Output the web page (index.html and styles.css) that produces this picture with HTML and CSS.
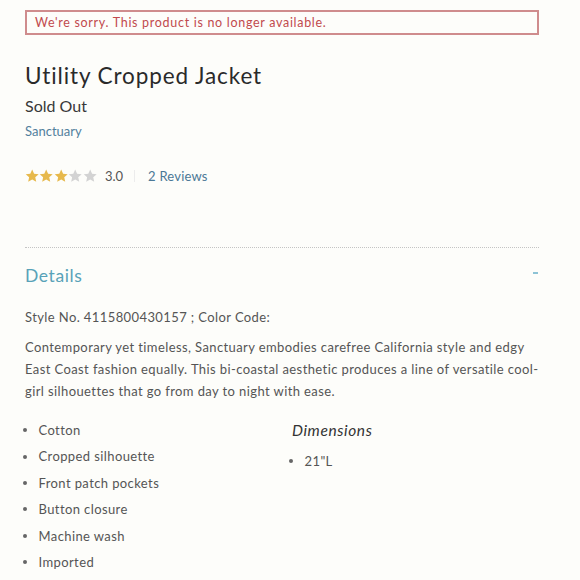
FILE: index.html
```html
<!DOCTYPE html>
<html lang="en">
<head>
    <meta charset="UTF-8">
    <meta name="viewport" content="width=device-width, initial-scale=1.0">
    <title>Utility Cropped Jacket</title>
    <link rel="stylesheet" href="styles.css">
</head>
<body>
    <div class="product">
        <div class="notice">We're sorry. This product is no longer available.</div>

        <h1 class="product-name">Utility Cropped Jacket</h1>
        <div class="price">Sold Out</div>
        <a class="brand" href="#">Sanctuary</a>

        <div class="rating">
            <span class="stars">
                <svg class="star on" viewBox="0 0 24 24"><path d="M12 1l3.2 7 7.6.8-5.7 5.1 1.6 7.5L12 17.6l-6.7 3.8 1.6-7.5-5.7-5.1 7.6-.8z"/></svg>
                <svg class="star on" viewBox="0 0 24 24"><path d="M12 1l3.2 7 7.6.8-5.7 5.1 1.6 7.5L12 17.6l-6.7 3.8 1.6-7.5-5.7-5.1 7.6-.8z"/></svg>
                <svg class="star on" viewBox="0 0 24 24"><path d="M12 1l3.2 7 7.6.8-5.7 5.1 1.6 7.5L12 17.6l-6.7 3.8 1.6-7.5-5.7-5.1 7.6-.8z"/></svg>
                <svg class="star" viewBox="0 0 24 24"><path d="M12 1l3.2 7 7.6.8-5.7 5.1 1.6 7.5L12 17.6l-6.7 3.8 1.6-7.5-5.7-5.1 7.6-.8z"/></svg>
                <svg class="star" viewBox="0 0 24 24"><path d="M12 1l3.2 7 7.6.8-5.7 5.1 1.6 7.5L12 17.6l-6.7 3.8 1.6-7.5-5.7-5.1 7.6-.8z"/></svg>
            </span>
            <span class="score">3.0</span>
            <span class="divider"></span>
            <a class="reviews" href="#">2 Reviews</a>
        </div>

        <div class="details">
            <div class="details-head">
                <h2>Details</h2>
                <span class="toggle"></span>
            </div>
            <p class="style-no">Style No. 4115800430157 ; Color Code:</p>
            <p class="description">Contemporary yet timeless, Sanctuary embodies carefree California style and edgy East Coast fashion equally. This bi-coastal aesthetic produces a line of versatile cool-girl silhouettes that go from day to night with ease.</p>

            <div class="specs">
                <ul class="bullets">
                    <li>Cotton</li>
                    <li>Cropped silhouette</li>
                    <li>Front patch pockets</li>
                    <li>Button closure</li>
                    <li>Machine wash</li>
                    <li>Imported</li>
                </ul>
                <div class="dimensions">
                    <h3>Dimensions</h3>
                    <ul class="bullets">
                        <li>21"L</li>
                    </ul>
                </div>
            </div>
        </div>
    </div>
</body>
</html>
```

FILE: styles.css
```css
body {
    margin: 0;
    background-color: #fdfdfa;
    font-family: Lato, "Open Sans", sans-serif;
    color: #555;
}

.product {
    width: 514px;
    padding: 10px 0 0 25px;
}

.notice {
    height: 21px;
    line-height: 21px;
    padding: 0 8px;
    border: 2px solid #cf8c8d;
    font-size: 12.5px;
    letter-spacing: 0.7px;
    color: #c14a4d;
}

.product-name {
    margin: 26px 0 0;
    font-size: 22.5px;
    line-height: 30px;
    font-weight: normal;
    letter-spacing: 0.9px;
    color: #2a2a2a;
}

.price {
    margin-top: 3px;
    font-size: 16px;
    line-height: 24px;
    color: #383838;
}

.brand {
    display: block;
    margin-top: 3px;
    font-size: 13px;
    line-height: 20px;
    color: #52809d;
    text-decoration: none;
}

.rating {
    display: flex;
    align-items: center;
    margin-top: 25px;
    height: 20px;
    font-size: 13px;
}

.stars {
    display: flex;
}

.star {
    width: 14.4px;
    height: 14.4px;
    fill: #d3d3d3;
}

.star.on {
    fill: #e7b94c;
}

.score {
    margin-left: 8px;
    color: #555;
}

.divider {
    width: 1px;
    height: 12px;
    margin: 0 13px 0 11px;
    background: #ececec;
}

.reviews {
    color: #4b7896;
    letter-spacing: 0.2px;
    text-decoration: none;
}

.details {
    margin-top: 61px;
    border-top: 1px dotted #c4c4c4;
}

.details-head {
    display: flex;
    justify-content: space-between;
    align-items: center;
    margin-top: 15px;
}

.details-head h2 {
    margin: 0;
    font-size: 17.5px;
    line-height: 26px;
    font-weight: normal;
    letter-spacing: 0.6px;
    color: #58a2b8;
}

.toggle {
    width: 5px;
    height: 2px;
    margin: 0 1px 6px 0;
    background: #8dc3d5;
}

.style-no {
    margin: 17px 0 0;
    font-size: 13px;
    line-height: 22px;
    letter-spacing: 0.4px;
}

.description {
    margin: 8px 0 0;
    font-size: 13px;
    line-height: 22px;
    letter-spacing: 0.4px;
}

.specs {
    display: grid;
    grid-template-columns: 266px 1fr;
    margin-top: 15px;
}

.bullets {
    margin: 0;
    padding: 0;
    list-style: none;
    font-size: 13px;
    line-height: 26.4px;
    letter-spacing: 0.4px;
}

.bullets li {
    display: flex;
    align-items: center;
}

.bullets li::before {
    content: "";
    flex: none;
    width: 4px;
    height: 4px;
    margin: 0 11.5px 0 -2px;
    border-radius: 50%;
    background: #666;
}

.dimensions h3 {
    margin: 0 0 5px;
    padding-left: 1px;
    font-size: 15.5px;
    line-height: 26px;
    font-weight: normal;
    font-style: italic;
    letter-spacing: 0.6px;
    color: #333;
}
```
